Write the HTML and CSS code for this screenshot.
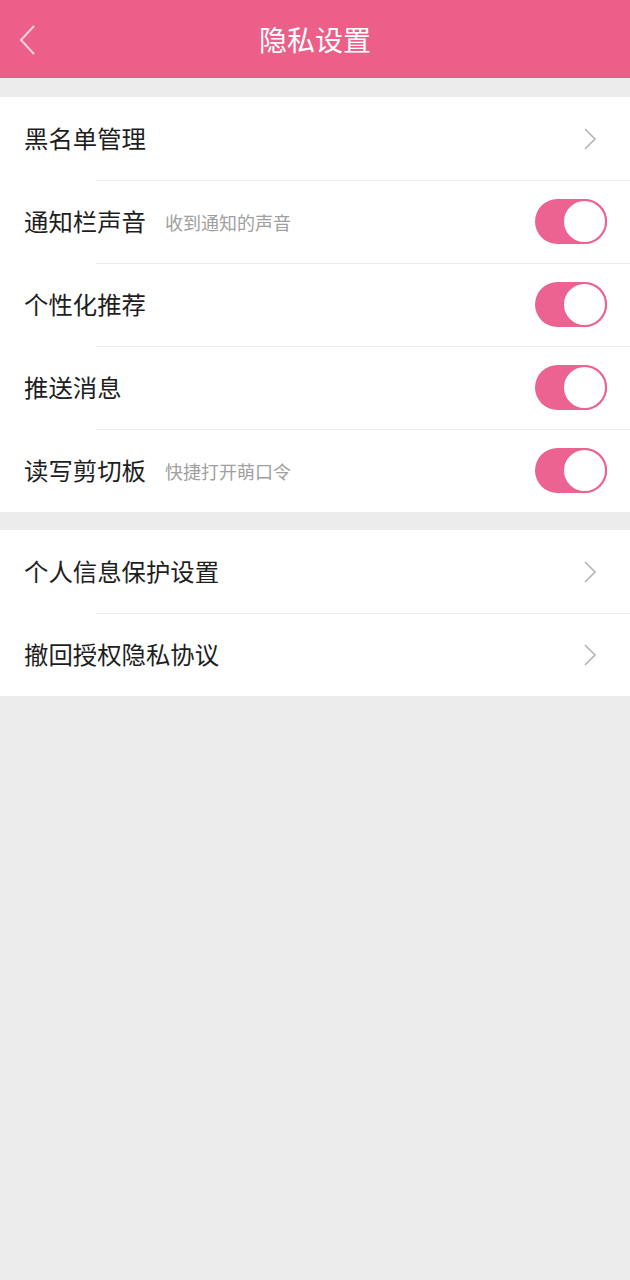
FILE: index.html
```html
<!DOCTYPE html>
<html lang="zh-CN">
<head>
  <meta charset="UTF-8">
  <meta name="viewport" content="width=device-width, initial-scale=1">
  <title>隐私设置</title>
  <link rel="stylesheet" href="styles.css">
</head>
<body>
  <header class="top-bar">
    <span class="back">
      <svg width="20" height="32" viewBox="0 0 20 32"><path d="M16 2 L3 16 L16 30" fill="none" stroke="#f7d3df" stroke-width="2"/></svg>
    </span>
    <h1>隐私设置</h1>
  </header>

  <section class="group first">
    <div class="row">
      <span class="label">黑名单管理</span>
      <svg class="chevron" width="14" height="22" viewBox="0 0 14 22"><path d="M2 1 L12 11 L2 21" fill="none" stroke="#b4b4b4" stroke-width="1.6"/></svg>
    </div>
    <div class="row">
      <span class="label">通知栏声音</span><span class="hint">收到通知的声音</span>
      <span class="switch on"><span class="knob"></span></span>
    </div>
    <div class="row">
      <span class="label">个性化推荐</span>
      <span class="switch on"><span class="knob"></span></span>
    </div>
    <div class="row">
      <span class="label">推送消息</span>
      <span class="switch on"><span class="knob"></span></span>
    </div>
    <div class="row">
      <span class="label">读写剪切板</span><span class="hint">快捷打开萌口令</span>
      <span class="switch on"><span class="knob"></span></span>
    </div>
  </section>

  <section class="group">
    <div class="row">
      <span class="label">个人信息保护设置</span>
      <svg class="chevron" width="14" height="22" viewBox="0 0 14 22"><path d="M2 1 L12 11 L2 21" fill="none" stroke="#b4b4b4" stroke-width="1.6"/></svg>
    </div>
    <div class="row">
      <span class="label">撤回授权隐私协议</span>
      <svg class="chevron" width="14" height="22" viewBox="0 0 14 22"><path d="M2 1 L12 11 L2 21" fill="none" stroke="#b4b4b4" stroke-width="1.6"/></svg>
    </div>
  </section>
</body>
</html>
```

FILE: styles.css
```css
body { margin: 0; background: #ececec; font-family: "Noto Sans CJK SC", "Noto Sans", sans-serif; color: #1e1e1e; }
.top-bar { height: 78px; background: #ec5f89; display: flex; align-items: center; justify-content: center; position: relative; }
.top-bar h1 { margin: 0; font-size: 28px; font-weight: 400; color: #fff; line-height: 1; }
.top-bar .back { position: absolute; left: 18px; top: 24px; }
.group { background: #fff; margin-top: 18px; }
.group.first { margin-top: 19px; }
.row { height: 83px; display: flex; align-items: center; padding: 0 23px 0 24px; background: linear-gradient(#ebebeb, #ebebeb) no-repeat 96px 0 / 100% 1px; }
.row:first-child { background: none; }
.label { font-size: 24.4px; line-height: 1; }
.hint { font-size: 18px; color: #a0a0a0; margin-left: 19px; line-height: 1; }
.chevron { margin-left: auto; margin-right: 10px; }
.switch { margin-left: auto; width: 72px; height: 45px; border-radius: 23px; background: #ec6290; display: flex; justify-content: flex-end; }
.switch .knob { width: 45px; height: 45px; box-sizing: border-box; border-radius: 50%; background: #fff; border: 2px solid #ec6290; }
```
